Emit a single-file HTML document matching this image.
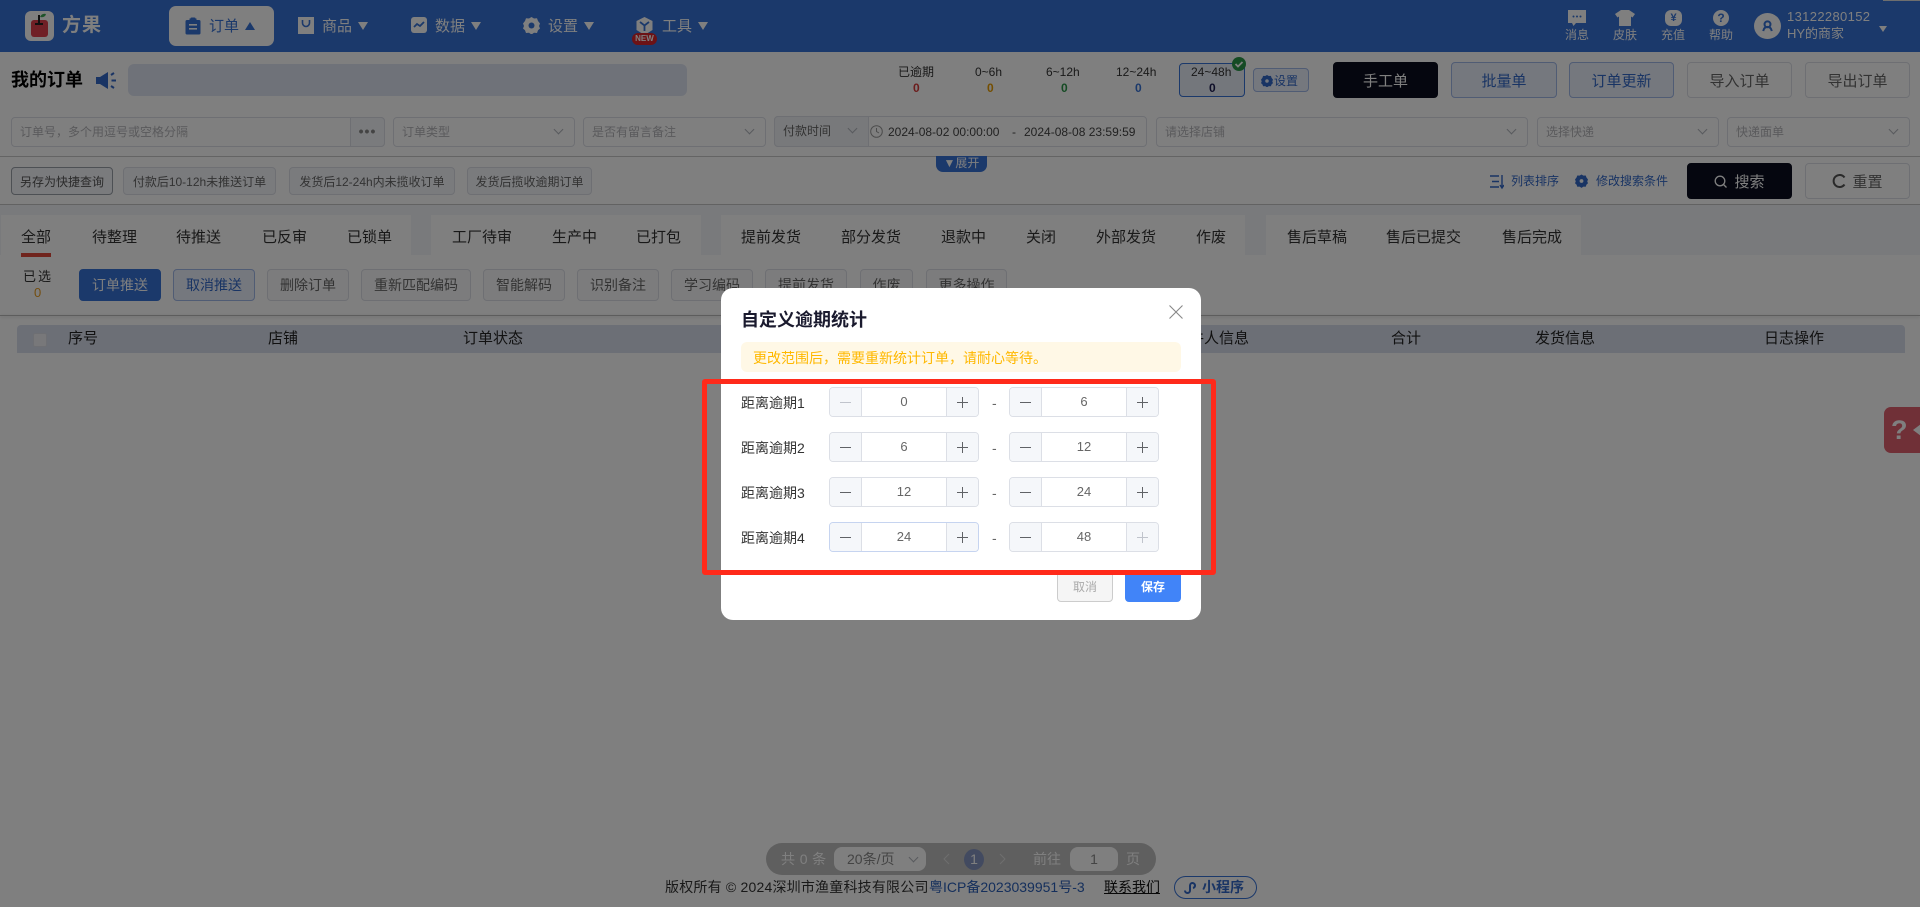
<!DOCTYPE html>
<html lang="zh-CN">
<head>
<meta charset="utf-8">
<title>我的订单</title>
<style>
html,body{margin:0;padding:0;width:1920px;height:907px;overflow:hidden;background:#fff}
body{font-family:"Liberation Sans","Noto Sans CJK SC",sans-serif;color:#333;position:relative}
.a{position:absolute}
.t{position:absolute;white-space:nowrap;line-height:20px}
.b{position:absolute;box-sizing:border-box;display:flex;align-items:center;justify-content:center;white-space:nowrap;border:1px solid #dcdfe6;border-radius:4px;background:#fff}
.nav{font-size:15px;color:#fff;top:17px}
.tri{position:absolute;width:0;height:0;border-left:5px solid transparent;border-right:5px solid transparent;border-top:8px solid #fff;top:22px}
.ht{font-size:12px;color:#fff;top:25px}
.inp{position:absolute;box-sizing:border-box;height:30px;top:117px;border:1px solid #dcdfe6;border-radius:4px;background:#fff;font-size:12px;color:#b4b4b8;line-height:28px;padding-left:8px;white-space:nowrap}
.chev{position:absolute;width:7px;height:7px;border-right:1px solid #b0b4bc;border-bottom:1px solid #b0b4bc;transform:rotate(45deg);box-sizing:border-box;right:12px;top:8px}
.q{height:28px;top:167px;font-size:12px;color:#666;background:#f4f6fb}
.r2{height:36px;top:62px;font-size:15px;color:#666}
.blk{background:#0a0c1e;border-color:#0a0c1e;color:#fff}
.blu{background:#eaf0fd;border-color:#a0b8e8;color:#3268c8}
.st{font-size:12px;color:#333;top:62px}
.sn{font-size:12px;font-weight:bold;top:78px}
.tab{font-size:15px;color:#333;top:228px}
.g{position:absolute;top:215px;height:40px;background:#fff}
.ac{height:32px;top:269px;font-size:14px;color:#666;background:#f9f9fb}
.th{font-size:15px;color:#222;top:329px}
.ng{position:absolute;box-sizing:border-box;height:30px;border:1px solid #dcdfe6;border-radius:4px;background:#fff;overflow:hidden;font-size:13px;color:#666;text-align:center;line-height:28px}
.m,.p{position:absolute;top:0;bottom:0;width:31px;background-color:#f5f7fa}
.m{left:0;border-right:1px solid #dcdfe6;background-image:linear-gradient(#606266,#606266);background-size:11px 1px;background-position:center;background-repeat:no-repeat}
.p{right:0;border-left:1px solid #dcdfe6;background-image:linear-gradient(#606266,#606266),linear-gradient(#606266,#606266);background-size:11px 1px,1px 11px;background-position:center,center;background-repeat:no-repeat}
.m.d{background-image:linear-gradient(#c0c4cc,#c0c4cc)}
.p.d{background-image:linear-gradient(#c0c4cc,#c0c4cc),linear-gradient(#c0c4cc,#c0c4cc)}
.lb{font-size:14px;color:#333;left:741px}
.ds{font-size:14px;color:#666;left:992px}
</style>
</head>
<body>

<!-- top bar -->
<div class="a" style="left:0;top:0;width:1920px;height:52px;background:#3772d6"></div>
<div class="a" style="left:1883px;top:0;width:37px;height:1px;background:#ddd"></div>

<!-- logo -->
<div class="a" style="left:25px;top:11px;width:29px;height:30px;background:#fff;border-radius:6px"></div>
<svg class="a" style="left:25px;top:11px" width="29" height="30" viewBox="0 0 29 30">
<rect x="6" y="9" width="17" height="17" rx="3" fill="#e0404c"/>
<rect x="13" y="4" width="2" height="9" fill="#222"/>
<rect x="10" y="12" width="8" height="2" fill="#222"/>
<path d="M15 6 Q17 2 21 3 Q20 7 15 6Z" fill="#3aa655"/>
</svg>
<div class="t" style="left:62px;top:16px;font-size:19px;font-weight:bold;color:#fff;letter-spacing:1px">方果</div>

<!-- nav -->
<div class="a" style="left:169px;top:6px;width:105px;height:40px;background:#fff;border-radius:7px"></div>
<svg class="a" style="left:185px;top:17px" width="16" height="18" viewBox="0 0 16 18"><path d="M2 3h2.500V1.500h7V3H14a1.500 1.500 0 0 1 1.500 1.500V16a1.500 1.500 0 0 1-1.500 1.500H2A1.500 1.500 0 0 1 .5 16V4.500A1.500 1.500 0 0 1 2 3z" fill="#3772d6"/><rect x="4" y="7" width="8" height="1.600" fill="#fff"/><rect x="4" y="11" width="8" height="1.600" fill="#fff"/><rect x="5.500" y="0.500" width="5" height="3" rx="1" fill="#3772d6"/></svg>
<div class="t nav" style="left:209px;color:#3772d6">订单</div>
<div class="a" style="left:245px;top:22px;width:0;height:0;border-left:5px solid transparent;border-right:5px solid transparent;border-bottom:8px solid #3772d6"></div>

<svg class="a" style="left:298px;top:17px" width="16" height="17" viewBox="0 0 16 17"><path d="M0 0h16v17H0z" fill="#fff"/><path d="M4.500 3v3a3.500 3.500 0 0 0 7 0V3" fill="none" stroke="#3772d6" stroke-width="1.600"/></svg>
<div class="t nav" style="left:322px">商品</div><div class="tri" style="left:358px"></div>

<svg class="a" style="left:411px;top:17px" width="16" height="16" viewBox="0 0 16 16"><rect width="16" height="16" rx="3" fill="#fff"/><path d="M3 10l3-3 3 2 4-4" fill="none" stroke="#3772d6" stroke-width="1.800"/></svg>
<div class="t nav" style="left:435px">数据</div><div class="tri" style="left:471px"></div>

<svg class="a" style="left:523px;top:17px" width="17" height="17" viewBox="0 0 17 17"><path d="M8.500 0l2.500 1.500 3-.2 1 2.700 2 2.500-1 2.500 1 2.500-2 1.700-1 2.800-3-.2-2.500 1.700-2.500-1.700-3 .2-1-2.800-2-1.700 1-2.500-1-2.500 2-2.500 1-2.700 3 .2z" fill="#fff"/><circle cx="8.500" cy="8.500" r="3" fill="#3772d6"/></svg>
<div class="t nav" style="left:548px">设置</div><div class="tri" style="left:584px"></div>

<svg class="a" style="left:636px;top:17px" width="17" height="18" viewBox="0 0 17 18"><path d="M8.500 0l8 4v9l-8 5-8-5V4z" fill="#fff"/><path d="M4 5l4.500 3.500L13 5M8.500 8.500V14" fill="none" stroke="#3772d6" stroke-width="1.800"/></svg>
<div class="a" style="left:632px;top:33px;width:25px;height:12px;border-radius:6px;background:#d8242a;color:#fff;font-size:8px;font-weight:bold;line-height:12px;text-align:center">NEW</div>
<div class="t nav" style="left:662px">工具</div><div class="tri" style="left:698px"></div>

<!-- header right -->
<svg class="a" style="left:1568px;top:10px" width="18" height="16" viewBox="0 0 18 16"><path d="M0 0h18v13H8l-2.500 3L4 13H0z" fill="#fff"/><circle cx="5.500" cy="6.500" r="1" fill="#3772d6"/><circle cx="9" cy="6.500" r="1" fill="#3772d6"/><circle cx="12.500" cy="6.500" r="1" fill="#3772d6"/></svg>
<div class="t ht" style="left:1565px">消息</div>
<svg class="a" style="left:1615px;top:10px" width="20" height="16" viewBox="0 0 20 16"><path d="M6 0h8l6 4-2.500 3.500L16 6.500V16H4V6.500L2.500 7.500 0 4z" fill="#fff"/></svg>
<div class="t ht" style="left:1613px">皮肤</div>
<div class="a" style="left:1665px;top:10px;width:17px;height:16px;background:#fff;border-radius:6px;color:#3772d6;font-size:11px;font-weight:bold;line-height:16px;text-align:center">¥</div>
<div class="t ht" style="left:1661px">充值</div>
<div class="a" style="left:1713px;top:10px;width:16px;height:16px;background:#fff;border-radius:50%;color:#3772d6;font-size:12px;font-weight:bold;line-height:16px;text-align:center">?</div>
<div class="t ht" style="left:1709px">帮助</div>
<div class="a" style="left:1754px;top:13px;width:27px;height:26px;background:#fff;border-radius:50%"></div>
<svg class="a" style="left:1762px;top:20px" width="11" height="12" viewBox="0 0 13 14"><circle cx="6.500" cy="5" r="3.500" fill="none" stroke="#3772d6" stroke-width="2.400"/><path d="M1.500 13c.5-3 2-5 5-5s4.500 2 5 5" fill="none" stroke="#3772d6" stroke-width="2.400"/></svg>
<div class="t" style="left:1787px;top:7px;font-size:13px;color:#fff;letter-spacing:.35px">13122280152</div>
<div class="t" style="left:1787px;top:24px;font-size:13px;color:#fff">HY的商家</div>
<div class="a" style="left:1879px;top:26px;width:0;height:0;border-left:4px solid transparent;border-right:4px solid transparent;border-top:6px solid #fff"></div>

<!-- title row -->
<div class="t" style="left:11px;top:70px;font-size:18px;font-weight:bold;color:#000">我的订单</div>
<svg class="a" style="left:96px;top:72px" width="21" height="17" viewBox="0 0 21 17"><path d="M0 5h4l8-5v17l-8-5H0z" fill="#3268c8"/><path d="M15 3l3-2M15.500 8.500H20M15 14l3 2" stroke="#3268c8" stroke-width="2" fill="none"/></svg>
<div class="a" style="left:128px;top:64px;width:559px;height:32px;background:#dfe5f3;border-radius:6px"></div>

<div class="t st" style="left:898px">已逾期</div><div class="t sn" style="left:913px;color:#d83838">0</div>
<div class="t st" style="left:975px">0~6h</div><div class="t sn" style="left:987px;color:#e89c00">0</div>
<div class="t st" style="left:1046px">6~12h</div><div class="t sn" style="left:1061px;color:#2a9648">0</div>
<div class="t st" style="left:1116px">12~24h</div><div class="t sn" style="left:1135px;color:#3772d6">0</div>
<div class="a" style="left:1179px;top:63px;width:66px;height:34px;box-sizing:border-box;border:1px solid #3772d6;border-radius:4px;background:#e8eef9"></div>
<div class="t st" style="left:1191px">24~48h</div><div class="t sn" style="left:1209px;color:#1c1c50">0</div>
<svg class="a" style="left:1232px;top:57px" width="14" height="14" viewBox="0 0 14 14"><circle cx="7" cy="7" r="7" fill="#2a9648"/><path d="M3.500 7l2.500 2.500 4.500-4.500" stroke="#fff" stroke-width="1.800" fill="none"/></svg>
<div class="b" style="left:1253px;top:68px;width:56px;height:24px;font-size:12px;color:#3268c8;background:#eaf0fd;border-color:#a0b8e8;justify-content:flex-start;padding-left:20px">设置</div>
<svg class="a" style="left:1261px;top:75px" width="12" height="12" viewBox="0 0 17 17"><path d="M8.500 0l2.500 1.500 3-.2 1 2.700 2 2.500-1 2.500 1 2.500-2 1.700-1 2.800-3-.2-2.500 1.700-2.500-1.700-3 .2-1-2.800-2-1.700 1-2.500-1-2.500 2-2.500 1-2.700 3 .2z" fill="#3268c8"/><circle cx="8.500" cy="8.500" r="2.500" fill="#eaf0fd"/></svg>

<div class="b r2 blk" style="left:1333px;width:105px">手工单</div>
<div class="b r2 blu" style="left:1451px;width:106px">批量单</div>
<div class="b r2 blu" style="left:1569px;width:105px">订单更新</div>
<div class="b r2" style="left:1687px;width:105px">导入订单</div>
<div class="b r2" style="left:1805px;width:105px">导出订单</div>

<!-- filters -->
<div class="inp" style="left:11px;width:374px">订单号，多个用逗号或空格分隔</div>
<div class="a" style="left:350px;top:117px;width:35px;height:30px;box-sizing:border-box;border:1px solid #dcdfe6;border-radius:0 4px 4px 0;background:#f5f7fa;color:#888;font-size:14px;font-weight:bold;line-height:26px;text-align:center;letter-spacing:1px">•••</div>
<div class="inp" style="left:393px;width:182px">订单类型<i class="chev"></i></div>
<div class="inp" style="left:583px;width:183px">是否有留言备注<i class="chev"></i></div>
<div class="a" style="left:774px;top:116px;width:373px;height:31px;box-sizing:border-box;border:1px solid #dcdfe6;border-radius:4px;background:#fff"></div>
<div class="a" style="left:774px;top:116px;width:95px;height:31px;box-sizing:border-box;border:1px solid #dcdfe6;border-radius:4px 0 0 4px;background:#f1f3f6;font-size:12px;color:#666;line-height:29px;padding-left:8px">付款时间<i class="chev"></i></div>
<svg class="a" style="left:870px;top:125px" width="13" height="13" viewBox="0 0 13 13"><circle cx="6.500" cy="6.500" r="5.800" fill="none" stroke="#999"/><path d="M6.500 3v3.500l2.500 1.500" fill="none" stroke="#999"/></svg>
<div class="t" style="left:888px;top:122px;font-size:12px;color:#444">2024-08-02 00:00:00</div>
<div class="t" style="left:1012px;top:122px;font-size:12px;color:#444">-</div>
<div class="t" style="left:1024px;top:122px;font-size:12px;color:#444">2024-08-08 23:59:59</div>
<div class="inp" style="left:1156px;width:372px">请选择店铺<i class="chev"></i></div>
<div class="inp" style="left:1537px;width:182px">选择快递<i class="chev"></i></div>
<div class="inp" style="left:1727px;width:183px">快递面单<i class="chev"></i></div>
<div class="a" style="left:0;top:156px;width:1920px;height:1px;background:#c9c9c9"></div>

<!-- quick row -->
<div class="b q" style="left:11px;width:102px;border-color:#9aa0a8;color:#555">另存为快捷查询</div>
<div class="b q" style="left:123px;width:153px">付款后10-12h未推送订单</div>
<div class="b q" style="left:289px;width:166px">发货后12-24h内未揽收订单</div>
<div class="b q" style="left:467px;width:125px">发货后揽收逾期订单</div>
<div class="a" style="left:936px;top:156px;width:51px;height:16px;background:#3772d6;border-radius:0 0 7px 7px;color:#fff;font-size:12px;line-height:15px;text-align:center">▼展开</div>
<svg class="a" style="left:1490px;top:174px" width="14" height="16" viewBox="0 0 14 16"><path d="M0 2h9M2 7.500h7M0 13h9M12 1v12M10 11l2 3 2-3" fill="none" stroke="#3268c8" stroke-width="1.400"/></svg>
<div class="t" style="left:1511px;top:171px;font-size:12px;color:#3268c8">列表排序</div>
<svg class="a" style="left:1575px;top:174px" width="13" height="14" viewBox="0 0 17 17"><path d="M8.500 0l2.500 1.500 3-.2 1 2.700 2 2.500-1 2.500 1 2.500-2 1.700-1 2.800-3-.2-2.500 1.700-2.500-1.700-3 .2-1-2.800-2-1.700 1-2.500-1-2.500 2-2.500 1-2.700 3 .2z" fill="#3268c8"/><circle cx="8.500" cy="8.500" r="2.500" fill="#fff"/></svg>
<div class="t" style="left:1596px;top:171px;font-size:12px;color:#3268c8">修改搜索条件</div>
<div class="b blk" style="left:1687px;top:163px;width:105px;height:36px;font-size:15px;padding-left:20px">搜索</div>
<svg class="a" style="left:1714px;top:175px" width="13" height="13" viewBox="0 0 13 13"><circle cx="6" cy="6" r="4.800" fill="none" stroke="#fff" stroke-width="1.300"/><path d="M9.500 9.500l3 3" stroke="#fff" stroke-width="1.300"/></svg>
<div class="b" style="left:1805px;top:163px;width:105px;height:36px;font-size:15px;color:#666;padding-left:20px">重置</div>
<svg class="a" style="left:1832px;top:174px" width="14" height="14" viewBox="0 0 14 14"><path d="M12.500 3.500A6 6 0 1 0 12.500 10.500" fill="none" stroke="#555" stroke-width="2"/></svg>
<div class="a" style="left:0;top:204px;width:1920px;height:1px;background:#c4c4c4"></div>

<!-- tabs -->
<div class="a" style="left:0;top:205px;width:1920px;height:50px;background:#f3f4f8"></div>
<div class="g" style="left:1px;width:410px"></div>
<div class="g" style="left:431px;width:270px"></div>
<div class="g" style="left:721px;width:524px"></div>
<div class="g" style="left:1266px;width:315px"></div>
<div class="t tab" style="left:21px">全部</div>
<div class="a" style="left:21px;top:253px;width:30px;height:4px;background:#e0483a"></div>
<div class="t tab" style="left:92px">待整理</div>
<div class="t tab" style="left:176px">待推送</div>
<div class="t tab" style="left:262px">已反审</div>
<div class="t tab" style="left:347px">已锁单</div>
<div class="t tab" style="left:452px">工厂待审</div>
<div class="t tab" style="left:552px">生产中</div>
<div class="t tab" style="left:636px">已打包</div>
<div class="t tab" style="left:741px">提前发货</div>
<div class="t tab" style="left:841px">部分发货</div>
<div class="t tab" style="left:941px">退款中</div>
<div class="t tab" style="left:1026px">关闭</div>
<div class="t tab" style="left:1096px">外部发货</div>
<div class="t tab" style="left:1196px">作废</div>
<div class="t tab" style="left:1287px">售后草稿</div>
<div class="t tab" style="left:1386px">售后已提交</div>
<div class="t tab" style="left:1502px">售后完成</div>

<!-- action row -->
<div class="t" style="left:23px;top:267px;font-size:13px;letter-spacing:2px">已选</div>
<div class="t" style="left:34px;top:283px;font-size:13px;color:#e89c20">0</div>
<div class="b ac" style="left:79px;width:82px;background:#3772d6;border-color:#3772d6;color:#fff">订单推送</div>
<div class="b ac" style="left:173px;width:82px;background:#eaf0fd;border-color:#a0b8e8;color:#3268c8">取消推送</div>
<div class="b ac" style="left:267px;width:82px">删除订单</div>
<div class="b ac" style="left:361px;width:110px">重新匹配编码</div>
<div class="b ac" style="left:483px;width:82px">智能解码</div>
<div class="b ac" style="left:577px;width:82px">识别备注</div>
<div class="b ac" style="left:671px;width:82px">学习编码</div>
<div class="b ac" style="left:765px;width:82px">提前发货</div>
<div class="b ac" style="left:860px;width:53px">作废</div>
<div class="b ac" style="left:926px;width:81px">更多操作</div>
<div class="a" style="left:0;top:315px;width:1920px;height:1px;background:#bbb;box-shadow:0 1px 3px rgba(0,0,0,.2)"></div>

<!-- table head -->
<div class="a" style="left:17px;top:325px;width:1888px;height:28px;background:#d8deed;border-radius:4px 4px 0 0"></div>
<div class="a" style="left:33px;top:333px;width:14px;height:14px;background:#f0f1f4;border:1px solid #dcdfe6;box-sizing:border-box;border-radius:2px"></div>
<div class="t th" style="left:68px">序号</div>
<div class="t th" style="left:268px">店铺</div>
<div class="t th" style="left:463px">订单状态</div>
<div class="t th" style="left:1174px">收件人信息</div>
<div class="t th" style="left:1391px">合计</div>
<div class="t th" style="left:1535px">发货信息</div>
<div class="t th" style="left:1764px">日志操作</div>

<!-- help tab -->
<div class="a" style="left:1884px;top:407px;width:36px;height:46px;background:#e0606e;border-radius:7px 0 0 7px"></div>
<div class="t" style="left:1891px;top:417px;font-size:27px;font-weight:bold;color:#fff;line-height:26px">?</div>
<div class="a" style="left:1913px;top:424px;width:0;height:0;border-top:6px solid transparent;border-bottom:6px solid transparent;border-right:8px solid #fff"></div>

<!-- pagination -->
<div class="a" style="left:766px;top:843px;width:390px;height:32px;border-radius:16px;background:#bfbfbf"></div>
<div class="t" style="left:781px;top:849px;font-size:14px;color:#fff;letter-spacing:.4px">共 0 条</div>
<div class="a" style="left:834px;top:847px;width:92px;height:24px;border-radius:8px;background:#fff;font-size:14px;color:#888;line-height:24px;padding-left:13px;box-sizing:border-box">20条/页<i class="chev" style="top:7px;right:9px"></i></div>
<svg class="a" style="left:943px;top:853px" width="7" height="12" viewBox="0 0 7 12"><path d="M6 1L1 6l5 5" fill="none" stroke="#ddd"/></svg>
<div class="a" style="left:964px;top:849px;width:20px;height:21px;border-radius:50%;background:#8595c0;color:#fff;font-size:14px;line-height:21px;text-align:center">1</div>
<svg class="a" style="left:999px;top:853px" width="7" height="12" viewBox="0 0 7 12"><path d="M1 1l5 5-5 5" fill="none" stroke="#ddd"/></svg>
<div class="t" style="left:1033px;top:849px;font-size:14px;color:#fff">前往</div>
<div class="a" style="left:1070px;top:847px;width:48px;height:24px;border-radius:8px;background:#fff;font-size:14px;color:#888;line-height:24px;text-align:center">1</div>
<div class="t" style="left:1126px;top:849px;font-size:14px;color:#fff">页</div>

<!-- footer -->
<div class="t" style="left:665px;top:877px;font-size:14px;color:#333;letter-spacing:.2px">版权所有 © 2024深圳市渔童科技有限公司</div>
<div class="t" style="left:929px;top:877px;font-size:14px;color:#2a5fb8">粤ICP备2023039951号-3</div>
<div class="t" style="left:1104px;top:877px;font-size:14px;color:#111;text-decoration:underline">联系我们</div>
<div class="a" style="left:1174px;top:876px;width:83px;height:23px;box-sizing:border-box;border:1px solid #3772d6;border-radius:12px"></div>
<svg class="a" style="left:1184px;top:881px" width="12" height="13" viewBox="0 0 12 13"><path d="M1 9.500a2.500 2.500 0 0 0 5 0V4.500a2.500 2.500 0 1 1 3 2.500" fill="none" stroke="#3268c8" stroke-width="2"/></svg>
<div class="t" style="left:1202px;top:877px;font-size:14px;font-weight:bold;color:#3268c8">小程序</div>

<!-- overlay -->
<div class="a" style="left:0;top:0;width:1920px;height:907px;background:rgba(0,0,0,.5)"></div>

<!-- modal -->
<div class="a" style="left:721px;top:288px;width:480px;height:332px;background:#fff;border-radius:12px"></div>
<div class="t" style="left:741px;top:310px;font-size:18px;font-weight:bold;color:#1a1a2e">自定义逾期统计</div>
<svg class="a" style="left:1169px;top:305px" width="14" height="14" viewBox="0 0 14 14"><path d="M.5.500l13 13M13.500.500l-13 13" stroke="#888" stroke-width="1.100"/></svg>
<div class="a" style="left:741px;top:342px;width:440px;height:30px;background:#fff8e6;border-radius:6px"></div>
<div class="t" style="left:753px;top:348px;font-size:14px;color:#ffb800">更改范围后，需要重新统计订单，请耐心等待。</div>

<div class="t lb" style="top:393px">距离逾期1</div>
<div class="ng" style="left:829px;top:387px;width:150px"><span class="m d"></span>0<span class="p"></span></div>
<div class="t ds" style="top:393px">-</div>
<div class="ng" style="left:1009px;top:387px;width:150px"><span class="m"></span>6<span class="p"></span></div>

<div class="t lb" style="top:438px">距离逾期2</div>
<div class="ng" style="left:829px;top:432px;width:150px"><span class="m"></span>6<span class="p"></span></div>
<div class="t ds" style="top:438px">-</div>
<div class="ng" style="left:1009px;top:432px;width:150px"><span class="m"></span>12<span class="p"></span></div>

<div class="t lb" style="top:483px">距离逾期3</div>
<div class="ng" style="left:829px;top:477px;width:150px"><span class="m"></span>12<span class="p"></span></div>
<div class="t ds" style="top:483px">-</div>
<div class="ng" style="left:1009px;top:477px;width:150px"><span class="m"></span>24<span class="p"></span></div>

<div class="t lb" style="top:528px">距离逾期4</div>
<div class="ng" style="left:829px;top:522px;width:150px;border-color:#c6d4f0"><span class="m"></span>24<span class="p"></span></div>
<div class="t ds" style="top:528px">-</div>
<div class="ng" style="left:1009px;top:522px;width:150px"><span class="m"></span>48<span class="p d"></span></div>

<div class="b" style="left:1057px;top:570px;width:56px;height:32px;background:#f5f5f5;border-color:#ccc;color:#aaa;font-size:12px">取消</div>
<div class="b" style="left:1125px;top:570px;width:56px;height:32px;background:#4184f8;border-color:#4184f8;color:#fff;font-size:12px;font-weight:bold">保存</div>

<!-- red annotation -->
<div class="a" style="left:702px;top:379px;width:514px;height:196px;box-sizing:border-box;border:5px solid #ff2a1a;border-radius:3px"></div>

</body>
</html>
